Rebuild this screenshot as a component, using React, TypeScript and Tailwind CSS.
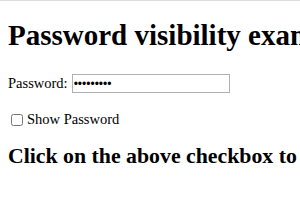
import React from "react";

export default function App() {
  return (
    <div
      className="w-[300px] h-[210px] overflow-hidden border-t border-[#dcdcdc] bg-white px-2 text-black whitespace-nowrap"
      style={{ fontFamily: '"Liberation Serif", "Times New Roman", serif' }}
    >
      <h1 className="mt-[18px] text-[29px] leading-[33px] font-bold">
        Password visibility example
      </h1>
      <div className="mt-[22px] flex items-center h-[19px]">
        <label className="text-[14.5px] leading-[17px]">Password:</label>
        <input
          type="password"
          defaultValue="password1"
          readOnly
          className="ml-[4px] w-[158px] h-[19px] border border-[#b0b0b0] pl-[1px] text-[12px] outline-none"
          style={{ fontFamily: '"Liberation Sans", Arial, sans-serif' }}
        />
      </div>
      <div className="mt-[18px] flex items-center h-[17px]">
        <input
          type="checkbox"
          className="ml-[3px] mr-[4px] w-[12px] h-[12px] m-0"
        />
        <span className="text-[14.5px] leading-[17px]">Show Password</span>
      </div>
      <h2 className="mt-[16px] text-[21.8px] leading-[25px] font-bold">
        Click on the above checkbox to show password
      </h2>
    </div>
  );
}
